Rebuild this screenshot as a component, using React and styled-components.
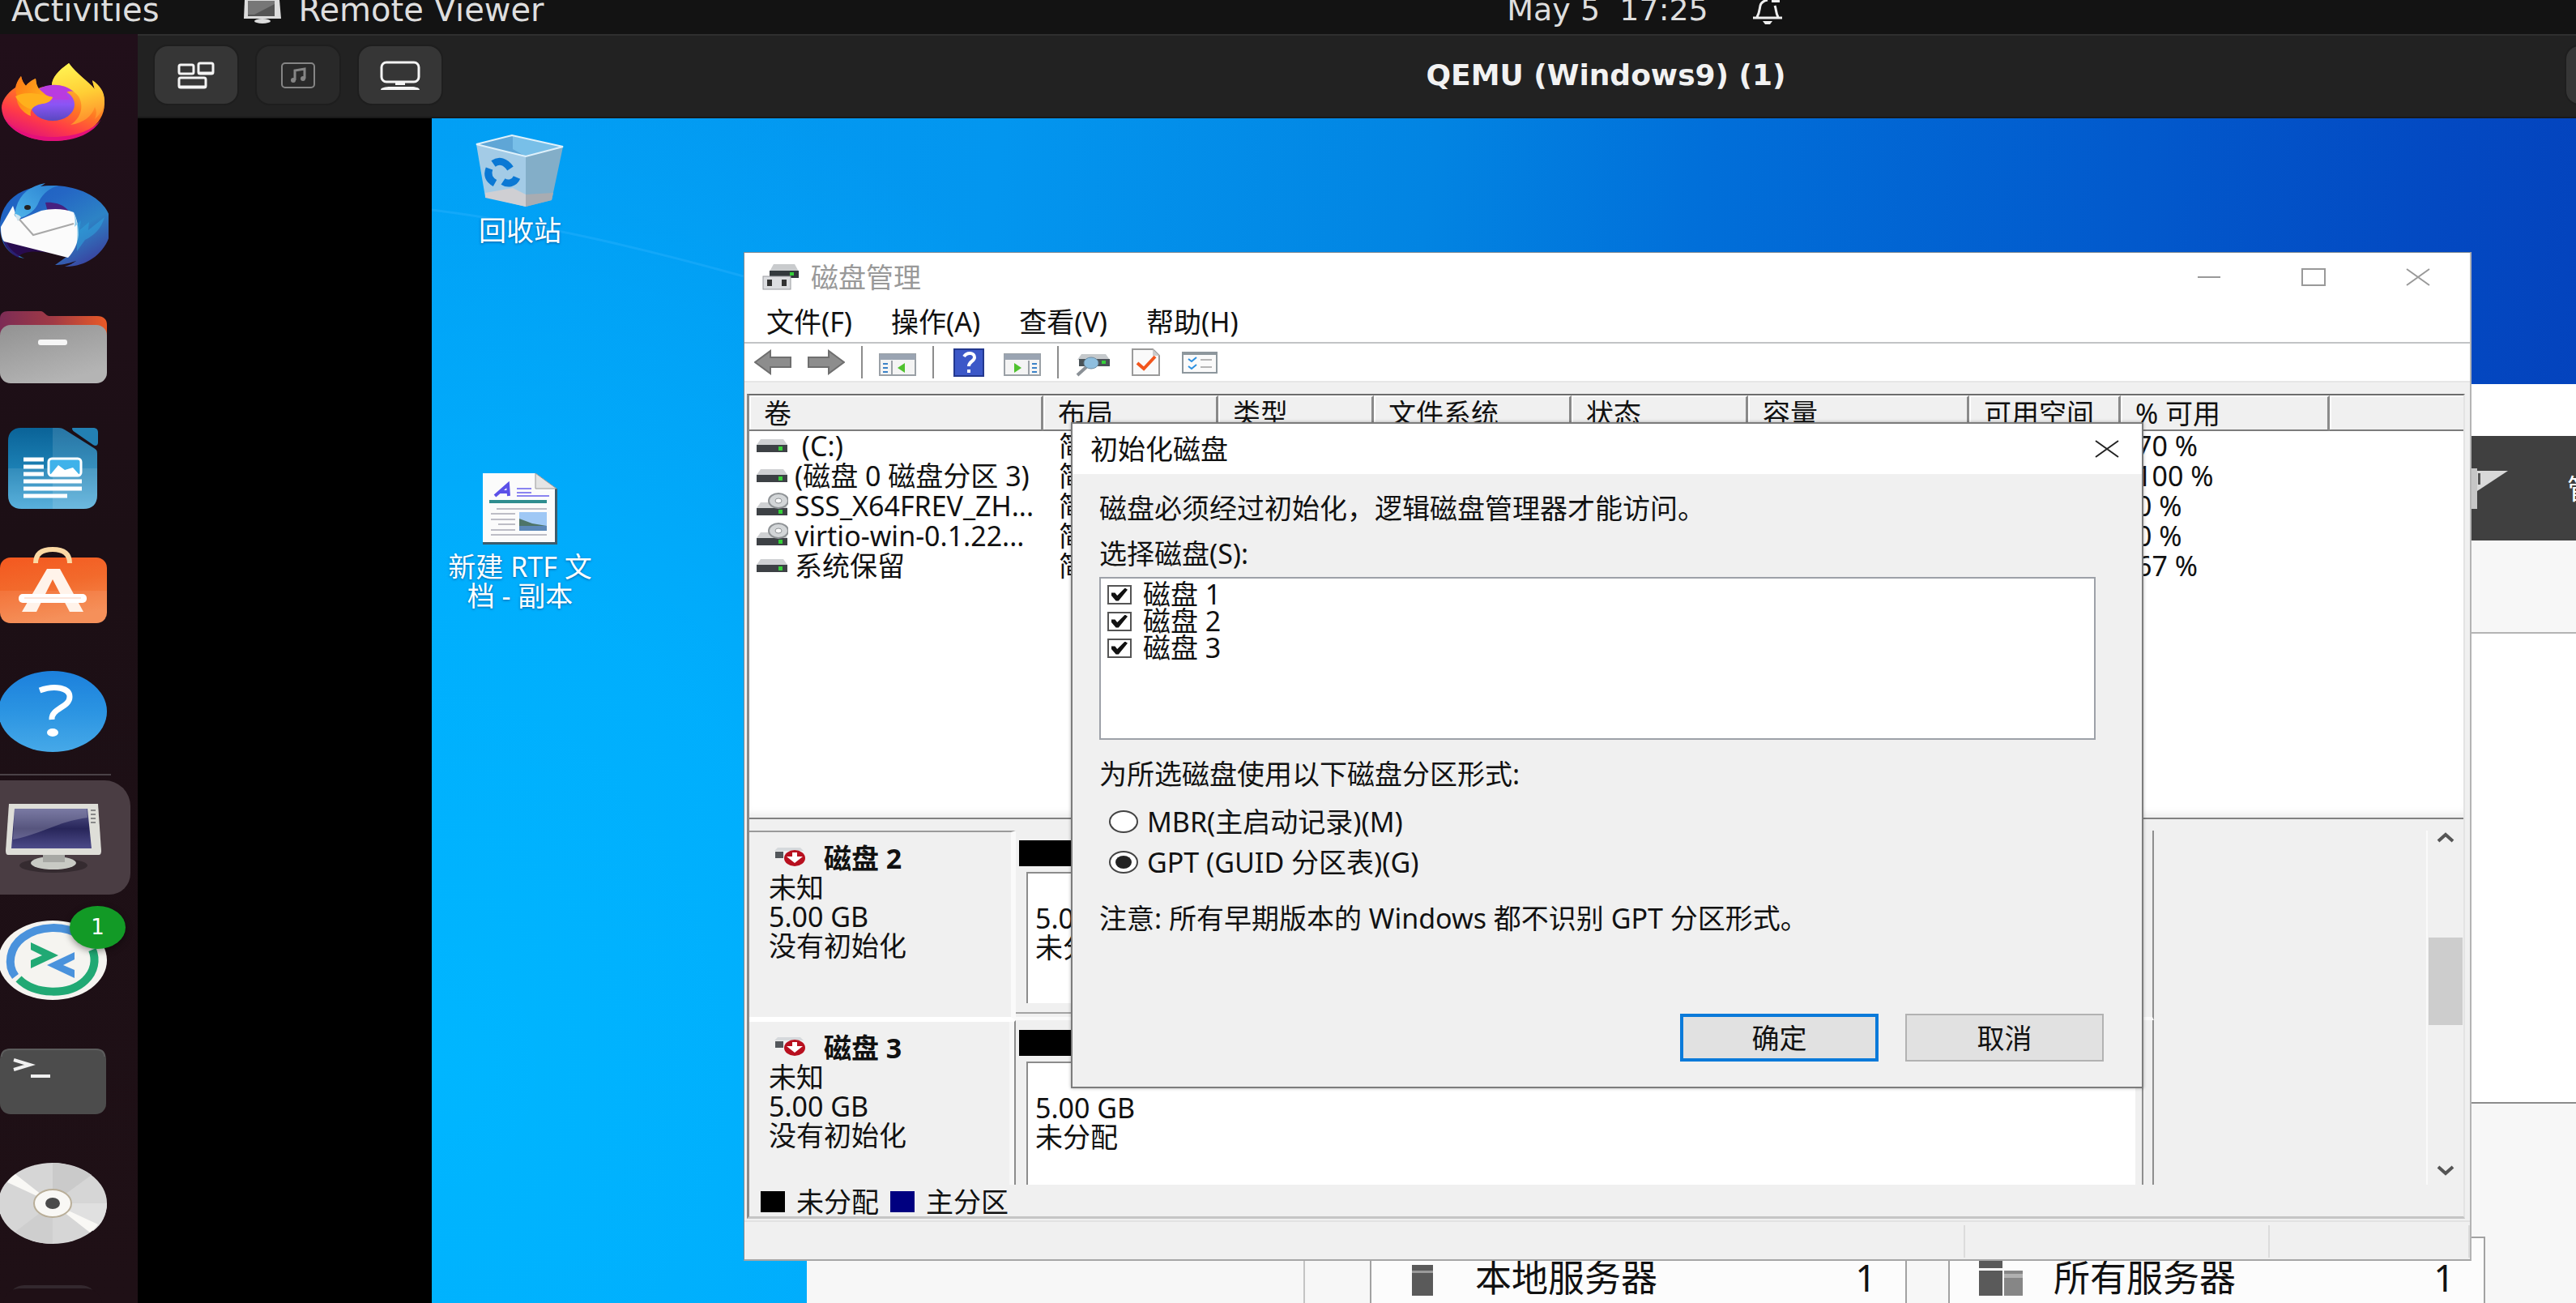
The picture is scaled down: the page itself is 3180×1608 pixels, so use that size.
import React from "react";
import styled, { createGlobalStyle, css } from "styled-components";

const shellFont = `"DejaVu Sans", "Noto Sans", sans-serif`;
const winFont = `"Noto Sans", "Noto Sans CJK SC", sans-serif`;

const Global = createGlobalStyle`
  * { box-sizing: border-box; }
  html, body { margin: 0; height: 100%; overflow: hidden; background: #131313; }
  #root { height: 100%; }
  button { font: inherit; color: inherit; border: 0; padding: 0; background: none; }
  svg { display: block; flex: none; }
`;

/* ---------- GNOME shell ---------- */

const Screen = styled.div`
  height: 100vh;
  display: flex;
  flex-direction: column;
  overflow: hidden;
  font-family: ${shellFont};
`;

const TopBar = styled.header`
  flex: none;
  height: 42px;
  display: flex;
  align-items: flex-start;
  background: #131313;
  color: #dedede;
  font-size: 38px;
  line-height: 24px;
  white-space: pre;
`;

const TopLeft = styled.div`
  flex: 0 0 58.5%;
  display: flex;
  padding-left: 14px;
  gap: 104px;
  font-size: 40px;
`;

const TopButton = styled.button`
  display: flex;
  align-items: flex-start;
  gap: 20px;
  line-height: 24px;
`;

const TopCenter = styled.div`
  display: flex;
  gap: 54px;
`;

const Workspace = styled.div`
  flex: 1;
  min-height: 0;
  display: flex;
`;

const Dock = styled.nav`
  flex: none;
  width: 170px;
  padding-top: 7px;
  display: flex;
  flex-direction: column;
  background: linear-gradient(#210f1a, #1c0f15 40%, #1f1016);
  overflow: hidden;
`;

const DockSlot = styled.div`
  position: relative;
  flex: none;
  height: 151px;
  display: flex;
  align-items: center;
`;

const DockButton = styled.button`
  width: 161px;
  height: 141px;
  display: flex;
  align-items: center;
  border-radius: 0 32px 26px 0;
  background: ${(p) => (p.$active ? "#4a3d43" : "transparent")};
`;

const DockRule = styled.hr`
  flex: none;
  width: 137px;
  height: 2px;
  margin: 0 0 1px;
  border: 0;
  background: #4a4247;
`;

const Badge = styled.span`
  position: absolute;
  left: 86px;
  top: 9px;
  width: 69px;
  height: 53px;
  border-radius: 50%;
  background: #129a26;
  color: #fff;
  font-size: 26px;
  line-height: 53px;
  text-align: center;
  box-shadow: 0 3px 8px rgba(0, 0, 0, 0.4);
`;

const Viewer = styled.main`
  flex: 1;
  min-width: 0;
  display: flex;
  flex-direction: column;
`;

const ViewerHeader = styled.div`
  flex: none;
  height: 104px;
  display: flex;
  align-items: center;
  padding: 0 0 3px 21px;
  background: #222;
  border-top: 2px solid #2f2f2f;
  border-bottom: 2px solid #191919;
  overflow: hidden;
`;

const ViewerTools = styled.div`
  display: flex;
  gap: 24px;
`;

const ViewerButton = styled.button`
  flex: none;
  width: 102px;
  height: 71px;
  display: flex;
  align-items: center;
  justify-content: center;
  border-radius: 16px;
  background: ${(p) => (p.$dim ? "#292929" : "#363636")};
  box-shadow: 0 0 0 2px #1e1e1e;
`;

const ViewerTitle = styled.h1`
  flex: 1;
  margin: 0 0 0 252px;
  text-align: center;
  color: #f2f2f2;
  font-size: 36px;
  line-height: 48px;
`;

const ViewerEnd = styled.div`
  flex: none;
  width: 12px;
`;

const GuestScreen = styled.div`
  flex: 1;
  min-height: 0;
  padding-left: 363px;
  background: #000;
`;

/* ---------- Windows guest ---------- */

const Desktop = styled.div`
  position: relative;
  height: 100%;
  overflow: hidden;
  font-family: ${winFont};
  font-size: 34px;
  line-height: 36px;
  color: #111;
  background:
    radial-gradient(ellipse 1100px 1300px at 0 80%, #00b6ff 0%, rgba(0, 178, 255, 0.85) 45%, rgba(0, 168, 252, 0) 100%),
    linear-gradient(97deg, #029cf3 0%, #0396ef 25%, #0284e2 44%, #016fd9 56%, #0259cc 75%, #0349c2 88%, #043fba 100%);
`;

const Wallpaper = styled.svg`
  position: absolute;
  left: 0;
  top: 0;
`;

const Shortcuts = styled.div`
  position: relative;
  width: 218px;
  padding-top: 20px;
  display: flex;
  flex-direction: column;
  gap: 281px;
`;

const Shortcut = styled.button`
  display: flex;
  flex-direction: column;
  align-items: center;
  gap: 8px;
  padding: 0 8px;
  color: #fff;
  line-height: 36px;
  text-shadow: 0 1px 3px rgba(0, 50, 110, 0.6);
`;

const ServerWindow = styled.section`
  position: absolute;
  left: 463px;
  right: 0;
  top: 328px;
  bottom: 0;
  display: flex;
  flex-direction: column;
  background: #f7f7f7;
`;

const ServerCaption = styled.div`
  flex: none;
  height: 64px;
  background: #fff;
`;

const ServerNav = styled.div`
  flex: none;
  height: 129px;
  display: flex;
  align-items: center;
  justify-content: flex-end;
  gap: 72px;
  background: #404040;
  color: #fff;
`;

const ServerMenu = styled.button`
  width: 11px;
  overflow: hidden;
  white-space: nowrap;
  text-align: left;
`;

const ServerStrip = styled.div`
  flex: none;
  height: 115px;
  border-bottom: 2px solid #b4b4b4;
`;

const ServerBody = styled.div`
  flex: none;
  height: 580px;
  background: #fff;
  border-bottom: 2px solid #8c8c8c;
`;

const ServerTiles = styled.div`
  flex: 1;
  display: flex;
  padding: 164px 112px 0 0;
  gap: 51px;
`;

const TileBlank = styled.div`
  flex: 0 0 615px;
  margin-right: 29px;
  border-right: 2px solid #c4c4c4;
`;

const Tile = styled.div`
  flex: 1;
  display: flex;
  align-items: flex-start;
  padding: 27px 36px 0 36px;
  gap: 36px;
  background: #fcfcfc;
  border: 2px solid #a2a2a2;
  border-bottom: 0;
  font-size: 45px;
  line-height: 44px;
`;

const TileName = styled.span`
  flex: 1;
`;

const DiskWindow = styled.section`
  position: absolute;
  left: 385px;
  right: 129px;
  top: 165px;
  background: #f0f0f0;
  border: 1px solid #7e8a94;
  border-right: 2px solid #b4b4b4;
  border-bottom: 2px solid #a6a6a6;
`;

const TitleBar = styled.div`
  height: ${(p) => p.$h}px;
  display: flex;
  align-items: center;
  gap: 14px;
  padding-left: 22px;
  background: #fff;
  color: ${(p) => p.$ink};
`;

const TitleText = styled.h2`
  flex: 1;
  margin: 0;
  font-size: 34px;
  font-weight: 400;
  line-height: 36px;
`;

const CaptionButtons = styled.div`
  display: flex;
`;

const CaptionButton = styled.button`
  width: ${(p) => p.$w || 129}px;
  height: 44px;
  display: flex;
  align-items: center;
  justify-content: center;
`;

const MenuBar = styled.div`
  height: 52px;
  display: flex;
  align-items: center;
  gap: 48px;
  padding-left: 27px;
  background: #fff;
  border-bottom: 2px solid #c2c4c6;
`;

const MenuButton = styled.button`
  line-height: 36px;
`;

const ToolBar = styled.div`
  height: 48px;
  display: flex;
  align-items: flex-end;
  gap: 20px;
  padding: 0 0 3px 12px;
  background: #fff;
  border-bottom: 2px solid #e6e6e6;
`;

const ToolSep = styled.span`
  width: 2px;
  height: 40px;
  background: #8c8c8c;
`;

const Frame = styled.div`
  margin: 14px 6px 0 3px;
  border-left: 3px solid #8a8a8a;
  border-top: 2px solid #6c6c6c;
  border-right: 2px solid #e3e3e3;
  border-bottom: 3px solid #c5c5c5;
`;

const VolumePane = styled.div`
  height: 523px;
  background: #fff;
  border-bottom: 2px solid #808080;
  box-shadow: inset 0 -10px 8px -4px #efefef;
`;

const VolumeTable = styled.table`
  width: 100%;
  table-layout: fixed;
  border-collapse: separate;
  border-spacing: 0;
  white-space: nowrap;
`;

const HeadCell = styled.th`
  height: 44px;
  padding: 0 0 0 18px;
  text-align: left;
  font-weight: 400;
  line-height: 36px;
  background: #f0f0f0;
  border-top: 2px solid #fff;
  border-bottom: 2px solid #7c7c7c;
  border-right: ${(p) => (p.$last ? 0 : 3)}px solid #8a8a8a;
  box-shadow: inset 2px 0 0 #fff;
`;

const Cell = styled.td`
  height: 37px;
  padding: 0 0 0 ${(p) => (p.$lead ? 8 : 19)}px;
  line-height: 37px;
  overflow: hidden;
`;

const VolumeName = styled.div`
  display: flex;
  align-items: center;
  gap: 8px;
  white-space: pre;
`;

const DiskPane = styled.div`
  height: 451px;
  padding-top: 14px;
  display: flex;
  overflow: hidden;
`;

const DiskRows = styled.div`
  flex: 1;
  min-width: 0;
`;

const DiskRow = styled.div`
  display: flex;
  height: 234px;
`;

const DiskLabel = styled.div`
  flex: 0 0 329px;
  padding: 14px 0 0 24px;
  line-height: 36px;
  ${(p) =>
    p.$selected
      ? css`
          border-top: 2px solid #9a9a9a;
          border-right: 6px solid #fafafa;
          border-bottom: 4px solid #fff;
        `
      : css`
          border-top: 2px solid #fff;
          border-right: 2px solid #8c8c8c;
          box-shadow: inset -6px 0 0 #f8f8f8;
        `}
`;

const DiskTitle = styled.div`
  display: flex;
  align-items: center;
  gap: 23px;
  padding-left: 7px;
  font-weight: 700;
`;

const DiskMap = styled.div`
  flex: 1;
  padding-right: 11px;
  border-right: 2px solid #8e8e8e;
  border-bottom: 4px solid #fafafa;
`;

const DiskInner = styled.div`
  height: 226px;
  padding: 12px 8px 0 4px;
  border-right: 2px solid #8e8e8e;
  border-bottom: 2px solid #a4a4a4;
`;

const DiskBar = styled.div`
  height: 32px;
  background: #000;
`;

const Partition = styled.div`
  height: 162px;
  margin: 7px 0 0 9px;
  padding: 37px 0 0 9px;
  background: #fff;
  border-left: 2px solid #8c8c8c;
  border-top: 2px solid #8c8c8c;
  line-height: 36px;
`;

const DiskRest = styled.div`
  flex: 0 0 336px;
`;

const ScrollBar = styled.div`
  flex: none;
  width: 46px;
  display: flex;
  flex-direction: column;
  align-items: center;
  padding: 0 0 6px;
  border-left: 2px solid #fafafa;
`;

const ScrollThumb = styled.div`
  width: 42px;
  height: 108px;
  margin: 112px 0 auto;
  background: #cdcdcd;
`;

const Legend = styled.div`
  height: 39px;
  display: flex;
  align-items: center;
  gap: 14px;
  padding: 3px 0 0 14px;
`;

const Swatch = styled.span`
  width: 30px;
  height: 26px;
  background: ${(p) => p.$fill};
`;

const StatusBar = styled.div`
  height: 48px;
  margin-top: 2px;
  padding: 4px 0 2px;
  display: flex;
  border-top: 2px solid #e2e2e2;
`;

const StatusCell = styled.div`
  flex: ${(p) => p.$flex};
  border-right: 2px solid #dcdcdc;
`;

const Dialog = styled.section`
  position: absolute;
  left: 403px;
  right: 403px;
  top: 209px;
  background: #f0f0f0;
  border: 2px solid #7c7c7c;
  box-shadow: 0 0 4px rgba(0, 0, 0, 0.3);
`;

const DialogBody = styled.div`
  padding: 24px 57px 0 33px;
`;

const Para = styled.p`
  margin: ${(p) => p.$top || 0}px 0 0;
  line-height: 36px;
`;

const CheckList = styled.div`
  height: 201px;
  margin-top: 11px;
  padding: 3px 8px;
  background: #fff;
  border: 2px solid #9da1a8;
`;

const Choice = styled.label`
  display: flex;
  align-items: center;
  gap: ${(p) => p.$gap}px;
  line-height: ${(p) => p.$line}px;
  width: max-content;
`;

const Check = styled.input`
  appearance: none;
  position: relative;
  width: 30px;
  height: 24px;
  margin: 0;
  background: #fff;
  border: 2px solid #555;
  &:checked::before {
    content: "";
    position: absolute;
    inset: 2px 3px;
    background: #111;
    clip-path: polygon(0 38%, 22% 38%, 36% 60%, 84% 0, 100% 14%, 44% 100%, 28% 100%, 0 60%);
  }
`;

const RadioGroup = styled.fieldset`
  margin: 23px 0 0;
  padding: 0 0 0 12px;
  border: 0;
  display: flex;
  flex-direction: column;
  gap: 14px;
`;

const Radio = styled.input`
  appearance: none;
  position: relative;
  width: 36px;
  height: 28px;
  margin: 0;
  background: #fff;
  border: 2px solid #444;
  border-radius: 50%;
  &:checked::before {
    content: "";
    position: absolute;
    inset: 4px 6px;
    border-radius: 50%;
    background: #222;
  }
`;

const DialogFoot = styled.div`
  display: flex;
  justify-content: flex-end;
  gap: 33px;
  padding: 100px 47px 31px 0;
`;

const PushButton = styled.button`
  width: 245px;
  height: 59px;
  background: #e1e1e1;
  border: ${(p) => (p.$primary ? "4px solid #0a7ad9" : "2px solid #b2b2b2")};
  line-height: 36px;
`;

/* ---------- drawings ---------- */

const DockSvg = ({ children }) => (
  <svg width="134" height="112" viewBox="0 0 134 112" aria-hidden="true">
    {children}
  </svg>
);

const Grad = ({ id, stops, v = "0 0 0 1" }) => {
  const [x1, y1, x2, y2] = v.split(" ");
  return (
    <linearGradient id={id} x1={x1} y1={y1} x2={x2} y2={y2}>
      {stops.map((c, i) => (
        <stop key={i} offset={i / (stops.length - 1)} stopColor={c} />
      ))}
    </linearGradient>
  );
};

const Firefox = () => (
  <DockSvg>
    <defs>
      <Grad id="ff1" v="0.8 0 0.3 1" stops={["#fff04a", "#ffbd2e", "#ff7a22", "#ff3b47", "#e0107c"]} />
      <Grad id="ff2" stops={["#c23be0", "#8a55f5", "#5a48c0"]} />
      <Grad id="ff3" v="0 0 1 0.4" stops={["#ff7a16", "#ffb41c"]} />
      <Grad id="ff4" v="0.4 0 0.6 1" stops={["#fff352", "#ffce35", "#ff8a2c"]} />
    </defs>
    <path fill="url(#ff1)" d="M26 25C22 30 20 34 19 39 8 46 2 56 2 64c1 24 29 41 63 41s64-19 64-46c0-13-5-22-15-28l3 11C108 30 96 24 85 9 72 18 64 27 64 37c-7 0-13 1-18 4l-2-13c-6 3-9 5-12 9-3-3-5-7-6-12z" />
    <path fill="#e3107a" d="M4 74c8 19 32 31 61 31s51-10 60-27c-9 13-31 22-60 22-30 0-52-10-61-26z" />
    <path fill="url(#ff4)" d="M85 9C72 18 64 27 64 36c15-1 26 5 33 14 7 12 3 27-10 35 16-2 27-11 30-22 3 5 2 10 0 15 8-7 12-15 12-23 0-11-6-19-15-25l3 11C108 30 96 24 85 9z" />
    <ellipse cx="65" cy="60" rx="27" ry="20" fill="url(#ff2)" />
    <path fill="#b93be0" d="M47 41c14-8 32-7 44 3-6-1-8 0-10 2l6 8H52z" />
    <path fill="url(#ff3)" d="M26 25c-6 8-8 18-5 25-2 8 6 20 17 24-2-8 4-14 14-15 8-1 11-4 13-8-6-1-9-3-12-6-3-3-8-5-9-17-6 3-9 5-12 9-3-3-5-7-6-12z" />
    <path fill="#ffb01c" d="M19 50c10-6 24-5 46 1-2 4-5 7-13 8-6 1-10 3-13 7-7-2-15-7-20-16z" />
  </DockSvg>
);

const Thunderbird = () => (
  <DockSvg>
    <defs>
      <Grad id="tb1" v="0 0 0.8 1" stops={["#1a5fc0", "#2466c4", "#2d83c5", "#3a3f9e"]} />
      <Grad id="tb2" v="1 0 0 1" stops={["#2a7fd0", "#4db4ea"]} />
    </defs>
    <path fill="url(#tb1)" d="M50 10c44-6 87 16 87 48 0 28-26 52-57 51 6-2 10-4 14-7-11 4-19 5-26 5l14-10L8 66C4 80 14 92 30 99 8 95 0 78 0 58 0 36 16 14 50 10z" />
    <path fill="#2b0a5c" d="M4 76l72 20 10 3C60 90 30 86 22 98 12 92 5 84 4 76z" opacity=".8" />
    <path fill="#47217f" d="M56 30c14-1 26 4 31 14l-28-2z" />
    <path fill="#fbfbfb" d="M16 34L1 60c0 8 1 14 4 18l79 20c7-7 12-18 13-28 0-10-2-20-6-28-12-5-28-5-40-2L22 52z" />
    <path fill="none" stroke="#a8a8a8" strokeWidth="2" d="M18 44l23 26 50-14" />
    <path fill="url(#tb2)" d="M56 6C34 10 21 22 18 46c2 3 4 3 6 3 12-3 20-10 24-20 5-11 14-17 24-20-6 0-12 0-22 1 3-2 5-3 6-4z" />
    <ellipse cx="34" cy="36" rx="4" ry="3" fill="#222" />
    <path fill="#cfe4ee" d="M18 44c3 0 6 2 8 4l-4 5z" />
    <path fill="#2fa3dc" d="M90 40c3 8 3 14 2 20l8-8-2 12 12-10-1 10 20-16c-4 14-12 22-24 28l-10 14c0-20 3-34-5-50z" opacity=".55" />
  </DockSvg>
);

const Files = () => (
  <DockSvg>
    <defs>
      <Grad id="fi1" v="0 0 1 0" stops={["#7c2c55", "#a13a45", "#ea5a26"]} />
      <Grad id="fi2" v="0 0 0.5 1" stops={["#929292", "#b4b4b4"]} />
    </defs>
    <path fill="url(#fi1)" d="M0 22c0-6 4-9 10-9h40c5 0 6 6 11 6h59c8 0 12 4 12 11v40H0z" />
    <rect x="0" y="30" width="132" height="72" rx="13" fill="url(#fi2)" />
    <rect x="47" y="48" width="36" height="7" rx="3" fill="#f6f6f6" />
  </DockSvg>
);

const Writer = () => (
  <DockSvg>
    <defs>
      <Grad id="wr" stops={["#0a6398", "#1c80b4", "#47a8d8"]} />
    </defs>
    <path fill="url(#wr)" d="M26 6h46c4 0 6 1 9 3l35 22c3 2 4 3 4 7v51c0 11-6 17-17 17H27c-11 0-17-6-17-17V22C10 12 16 6 26 6z" />
    <path fill="#fff" opacity=".12" d="M65 6h7c4 0 6 1 9 3l35 22c3 2 4 3 4 7v51c0 11-6 17-17 17H65z" />
    <path fill="#fff" opacity=".1" d="M10 56h110v33c0 11-6 17-17 17H27c-11 0-17-6-17-17z" />
    <path fill="#2380b3" d="M90 6h25c4 0 6 2 6 6v12c0 4-3 5-6 3L92 11c-3-2-4-5-2-5z" />
    <path stroke="#fff" strokeWidth="5" d="M29 45h25M29 54h25M29 63h25M29 72h72M29 81h72M29 90h54" />
    <rect x="60" y="44" width="40" height="21" rx="4" fill="#3fb2ea" stroke="#fff" strokeWidth="3" />
    <path fill="#fff" d="M62 64l10-12 8 6 10-3 8 9z" />
  </DockSvg>
);

const Software = () => (
  <DockSvg>
    <defs>
      <Grad id="so" v="0 0 0.3 1" stops={["#f4581f", "#f26a2c", "#f5874c"]} />
    </defs>
    <rect x="0" y="15" width="132" height="81" rx="13" fill="url(#so)" />
    <path fill="#fff" opacity=".08" d="M0 56h132v27c0 8-5 13-13 13H13C5 96 0 91 0 83z" />
    <path fill="none" stroke="#fbd9a4" strokeWidth="6" d="M44 22C44 9 53 5 65 5s21 4 21 17" />
    <path fill="#fff3ea" d="M27 82L58 29h16l29 53H86L65 42 45 82z" />
    <rect x="23" y="60" width="84" height="11" rx="5" fill="#fff" />
    <path stroke="#f8cdb8" strokeWidth="1" d="M30 65h70" />
  </DockSvg>
);

const Help = () => (
  <DockSvg>
    <defs>
      <Grad id="he" stops={["#1c80dc", "#2b94e2", "#46a9e8"]} />
    </defs>
    <ellipse cx="65" cy="54" rx="67" ry="50" fill="url(#he)" />
    <path fill="none" stroke="#fff" strokeWidth="7" d="M49 28c19-7 37-3 37 8 0 13-23 14-22 28" />
    <ellipse cx="65" cy="80" rx="7" ry="5" fill="#fff" />
  </DockSvg>
);

const Monitor = () => (
  <DockSvg>
    <defs>
      <Grad id="mo" stops={["#55558a", "#28265a", "#4c4a88"]} />
    </defs>
    <ellipse cx="66" cy="90" rx="42" ry="9" fill="#352b30" />
    <path fill="#deded8" d="M11 14h110l4 58c0 3-1 5-3 5H10c-2 0-3-2-3-5z" />
    <path fill="url(#mo)" d="M18 20h90l5 49H14z" />
    <path fill="#fff" opacity=".22" d="M18 20h89l1 11C70 36 50 52 16 58z" />
    <path stroke="#888" strokeWidth="2" d="M112 22h6M112 27h6M112 32h6M112 37h6" />
    <path fill="#a7a8a4" d="M53 77h27v8H53z" />
    <ellipse cx="66" cy="87" rx="28" ry="8" fill="#c8cac4" />
    <path fill="#a7a8a4" d="M53 78h27v8H53z" />
  </DockSvg>
);

const Remmina = () => (
  <DockSvg>
    <ellipse cx="65" cy="56" rx="67" ry="49" fill="#f5f4f0" />
    <path fill="none" stroke="#4a92dc" strokeWidth="10" d="M19 76C8 62 12 40 28 28c20-15 52-16 72-2" />
    <path fill="none" stroke="#21a974" strokeWidth="10" d="M23 79c20 20 62 21 82 2 12-11 14-26 9-38" />
    <path fill="#21a974" d="M38 34l34 16-34 16V56l14-6-14-7z" />
    <path fill="#4a92dc" d="M92 46L58 62l34 16V68l-14-6 14-7z" />
  </DockSvg>
);

const Terminal = () => (
  <DockSvg>
    <rect x="0" y="14" width="131" height="81" rx="13" fill="#4c4c4c" />
    <path fill="none" stroke="#5c5c5c" strokeWidth="2" d="M2 24c0-6 4-9 11-9h105c7 0 11 3 11 9" />
    <path fill="none" stroke="#f0f0f0" strokeWidth="4" d="M17 28l20 6-20 6M38 48h24" />
  </DockSvg>
);

const Disc = () => (
  <DockSvg>
    <ellipse cx="65" cy="54" rx="67" ry="50" fill="#d6d6d6" />
    <path fill="#cacaca" d="M65 54V4c18 0 36 7 48 15z" />
    <path fill="#e0e0e0" d="M65 54l67 0c0 14-6 26-17 34z" />
    <path fill="#cecece" d="M65 54v50c-18 0-35-6-46-15z" />
    <path fill="#f9f8f5" d="M65 54L9 28c2-4 6-7 10-10zM65 54l56 26c-3 4-6 7-10 10z" />
    <ellipse cx="65" cy="54" rx="23" ry="17" fill="#f9f8f5" stroke="#b9ae98" strokeWidth="2" />
    <ellipse cx="65" cy="54" rx="9" ry="7" fill="#4a4a4a" />
  </DockSvg>
);

const Hidden = () => (
  <DockSvg>
    <rect x="10" y="4" width="110" height="90" rx="20" fill="#33282e" />
    <rect x="4" y="8" width="122" height="90" rx="20" fill="#1f1016" />
  </DockSvg>
);

const DOCK_TOP = [
  ["Firefox", Firefox],
  ["Thunderbird", Thunderbird],
  ["Files", Files],
  ["Writer", Writer],
  ["Software", Software],
  ["Help", Help],
];
const DOCK_RUNNING = [
  ["Remote Viewer", Monitor, { active: true }],
  ["Remmina", Remmina, { badge: 1 }],
  ["Terminal", Terminal],
  ["Disc", Disc],
  ["More", Hidden],
];

const DockEntry = ({ name, Icon, active, badge }) => (
  <DockSlot>
    <DockButton $active={active} aria-label={name}>
      <Icon />
    </DockButton>
    {badge && <Badge>{badge}</Badge>}
  </DockSlot>
);

const DriveIcon = ({ cd }) => (
  <svg width="40" height="34" viewBox="0 0 40 34" aria-hidden="true">
    <g transform={cd ? undefined : "translate(0 -4)"}>
      <path fill="#cfd1d3" d="M6 12h28l5 7H1z" />
      <rect x="1" y="19" width="38" height="9" fill="#3d4145" />
      <rect x="28" y="21" width="5" height="5" fill="#35d13a" />
    </g>
    {cd && (
      <>
        <ellipse cx="28" cy="10" rx="12" ry="9" fill="#d3d6d8" stroke="#8f9396" strokeWidth="2" />
        <ellipse cx="28" cy="10" rx="4" ry="3" fill="#fff" stroke="#8f9396" strokeWidth="1" />
      </>
    )}
  </svg>
);

const DiskBadIcon = () => (
  <svg width="38" height="28" viewBox="0 0 38 28" aria-hidden="true">
    <path fill="#d6d9dc" d="M4 1h28l4 4H0z" />
    <rect x="1" y="6" width="10" height="8" fill="#53575b" />
    <ellipse cx="25" cy="14" rx="13" ry="10" fill="#b8101f" />
    <path fill="#fff" d="M22 7h6v5h7l-10 8-10-8h7z" />
  </svg>
);

const Cross = ({ color }) => (
  <svg width="30" height="22" viewBox="0 0 30 22" aria-hidden="true">
    <path fill="none" stroke={color} strokeWidth="2" d="M1 1l28 20M29 1L1 21" />
  </svg>
);

const TOOLS = [
  ["后退", <path fill="#8d8d8d" stroke="#6f6f6f" strokeWidth="2" d="M1 20L20 6v8h25v12H20v8z" />],
  ["前进", <path fill="#8d8d8d" stroke="#6f6f6f" strokeWidth="2" d="M45 20L26 6v8H1v12h25v8z" />],
  null,
  [
    "控制台树",
    <>
      <rect x="1" y="10" width="44" height="26" fill="#f4f4f4" stroke="#9aa0a6" strokeWidth="2" />
      <path fill="#9aa4b2" d="M1 10h44v7H1z" />
      <path stroke="#3b82c8" strokeWidth="2" d="M5 22h6M5 27h6M5 32h6" />
      <path stroke="#9aa0a6" strokeWidth="2" d="M16 18v18" />
      <path fill="#4fc22e" d="M32 21v12l-9-6z" />
    </>,
  ],
  null,
  [
    "帮助",
    <>
      <rect x="5" y="4" width="36" height="33" fill="#3c58c8" stroke="#23388f" strokeWidth="2" />
      <path fill="none" stroke="#fff" strokeWidth="4" d="M17 13c4-6 13-5 13 1 0 5-7 5-7 11M23 29v4" />
    </>,
  ],
  [
    "操作窗格",
    <>
      <rect x="1" y="10" width="44" height="26" fill="#f4f4f4" stroke="#9aa0a6" strokeWidth="2" />
      <path fill="#9aa4b2" d="M1 10h44v7H1z" />
      <path stroke="#3b82c8" strokeWidth="2" d="M35 22h6M35 27h6M35 32h6" />
      <path stroke="#9aa0a6" strokeWidth="2" d="M31 18v18" />
      <path fill="#4fc22e" d="M13 21v12l9-6z" />
    </>,
  ],
  null,
  [
    "刷新",
    <>
      <path fill="#c5c9cc" d="M8 10h30l5 7H3z" />
      <rect x="5" y="16" width="38" height="9" fill="#4a5358" />
      <rect x="33" y="18" width="5" height="4" fill="#35d13a" />
      <path stroke="#8a9096" strokeWidth="4" d="M14 26L3 36" />
      <ellipse cx="20" cy="21" rx="9" ry="7" fill="#8ebede" stroke="#6c8ca2" strokeWidth="1" />
    </>,
  ],
  [
    "属性",
    <>
      <path fill="#fafafa" stroke="#9a9a9a" strokeWidth="2" d="M5 4h25l8 8v24H5z" />
      <path fill="#ccc" d="M30 4v8h8z" />
      <path fill="none" stroke="#f2551c" strokeWidth="4" d="M11 21l8 7 14-15" />
    </>,
  ],
  [
    "列表",
    <>
      <rect x="1" y="8" width="42" height="25" fill="#fafafa" stroke="#8d979d" strokeWidth="2" />
      <path fill="#8d979d" d="M1 8h42v3H1z" />
      <path fill="none" stroke="#2a8fe0" strokeWidth="2" d="M8 16l4 3 6-5M8 25l4 3 6-5" />
      <path stroke="#b5b5b5" strokeWidth="2" d="M23 17h14M23 26h14" />
    </>,
  ],
];

/* ---------- data ---------- */

const COLUMNS = [
  ["卷", 363],
  ["布局", 216],
  ["类型", 192],
  ["文件系统", 244],
  ["状态", 218],
  ["容量", 273],
  ["可用空间", 187],
  ["% 可用", 258],
  ["", null],
];

const VOLUMES = [
  { name: " (C:)", free: "70 %" },
  { name: "(磁盘 0 磁盘分区 3)", free: "100 %" },
  { name: "SSS_X64FREV_ZH...", free: "0 %", cd: true },
  { name: "virtio-win-0.1.22...", free: "0 %", cd: true },
  { name: "系统保留", free: "67 %" },
];

const DISKS = [
  { name: "磁盘 2", selected: true },
  { name: "磁盘 3" },
];

const InitDialog = () => (
  <Dialog role="dialog" aria-labelledby="init-title">
    <TitleBar $h={62} $ink="#111">
      <TitleText id="init-title">初始化磁盘</TitleText>
      <CaptionButton $w={86} aria-label="关闭">
        <Cross color="#222" />
      </CaptionButton>
    </TitleBar>
    <DialogBody>
      <Para>磁盘必须经过初始化，逻辑磁盘管理器才能访问。</Para>
      <Para $top={20} id="pick">选择磁盘(S):</Para>
      <CheckList role="group" aria-labelledby="pick">
        {["磁盘 1", "磁盘 2", "磁盘 3"].map((d) => (
          <Choice key={d} $gap={14} $line={33}>
            <Check type="checkbox" defaultChecked />
            {d}
          </Choice>
        ))}
      </CheckList>
      <Para $top={24} id="style">为所选磁盘使用以下磁盘分区形式:</Para>
      <RadioGroup aria-labelledby="style">
        <Choice $gap={11} $line={36}>
          <Radio type="radio" name="style" />
          MBR(主启动记录)(M)
        </Choice>
        <Choice $gap={11} $line={36}>
          <Radio type="radio" name="style" defaultChecked />
          GPT (GUID 分区表)(G)
        </Choice>
      </RadioGroup>
      <Para $top={33}>注意: 所有早期版本的 Windows 都不识别 GPT 分区形式。</Para>
    </DialogBody>
    <DialogFoot>
      <PushButton $primary>确定</PushButton>
      <PushButton>取消</PushButton>
    </DialogFoot>
  </Dialog>
);

const DiskManagement = () => (
  <DiskWindow>
    <TitleBar $h={60} $ink="#999">
      <svg width="46" height="34" viewBox="0 0 46 34" aria-hidden="true">
        <path fill="#c9cbcd" d="M14 1h26l5 9H9z" />
        <rect x="9" y="9" width="36" height="9" fill="#33383c" />
        <rect x="34" y="11" width="5" height="4" fill="#35d13a" />
        <rect x="1" y="16" width="34" height="16" fill="#dcdde0" stroke="#9a9ca0" strokeWidth="1" />
        <path fill="#333" d="M6 20h6v8H6zM24 20h6v8h-6z" />
      </svg>
      <TitleText>磁盘管理</TitleText>
      <CaptionButtons>
        <CaptionButton aria-label="最小化">
          <svg width="30" height="22" viewBox="0 0 30 22" aria-hidden="true">
            <path stroke="#999" strokeWidth="2" d="M1 11h28" />
          </svg>
        </CaptionButton>
        <CaptionButton aria-label="最大化">
          <svg width="30" height="22" viewBox="0 0 30 22" aria-hidden="true">
            <rect x="1" y="1" width="28" height="20" fill="none" stroke="#999" strokeWidth="2" />
          </svg>
        </CaptionButton>
        <CaptionButton aria-label="关闭">
          <Cross color="#999" />
        </CaptionButton>
      </CaptionButtons>
    </TitleBar>
    <MenuBar>
      {["文件(F)", "操作(A)", "查看(V)", "帮助(H)"].map((m) => (
        <MenuButton key={m}>{m}</MenuButton>
      ))}
    </MenuBar>
    <ToolBar>
      {TOOLS.map((t, i) =>
        t ? (
          <button key={i} aria-label={t[0]}>
            <svg width="46" height="40" viewBox="0 0 46 40" aria-hidden="true">
              {t[1]}
            </svg>
          </button>
        ) : (
          <ToolSep key={i} />
        )
      )}
    </ToolBar>
    <Frame>
      <VolumePane>
        <VolumeTable>
          <colgroup>
            {COLUMNS.map(([name, width]) => (
              <col key={name} width={width || undefined} />
            ))}
          </colgroup>
          <thead>
            <tr>
              {COLUMNS.map(([name], i) => (
                <HeadCell key={name} $last={i === COLUMNS.length - 1}>
                  {name}
                </HeadCell>
              ))}
            </tr>
          </thead>
          <tbody>
            {VOLUMES.map((v) => (
              <tr key={v.name}>
                <Cell $lead>
                  <VolumeName>
                    <DriveIcon cd={v.cd} />
                    {v.name}
                  </VolumeName>
                </Cell>
                <Cell>简单</Cell>
                <Cell colSpan={5} />
                <Cell>{v.free}</Cell>
                <Cell />
              </tr>
            ))}
          </tbody>
        </VolumeTable>
      </VolumePane>
      <DiskPane>
        <DiskRows>
          {DISKS.map((d) => (
            <DiskRow key={d.name}>
              <DiskLabel $selected={d.selected}>
                <DiskTitle>
                  <DiskBadIcon />
                  {d.name}
                </DiskTitle>
                <div>未知</div>
                <div>5.00 GB</div>
                <div>没有初始化</div>
              </DiskLabel>
              <DiskMap>
                <DiskInner>
                  <DiskBar />
                  <Partition>
                    <div>5.00 GB</div>
                    <div>未分配</div>
                  </Partition>
                </DiskInner>
              </DiskMap>
              <DiskRest />
            </DiskRow>
          ))}
        </DiskRows>
        <ScrollBar>
          <svg width="24" height="20" viewBox="0 0 24 20" aria-hidden="true">
            <path fill="none" stroke="#555" strokeWidth="4" d="M3 13l9-8 9 8" />
          </svg>
          <ScrollThumb />
          <svg width="24" height="20" viewBox="0 0 24 20" aria-hidden="true">
            <path fill="none" stroke="#555" strokeWidth="4" d="M3 4l9 8 9-8" />
          </svg>
        </ScrollBar>
      </DiskPane>
      <Legend>
        <Swatch $fill="#000" />
        未分配
        <Swatch $fill="#000080" />
        主分区
      </Legend>
    </Frame>
    <StatusBar>
      <StatusCell $flex="1" />
      <StatusCell $flex="0 0 376px" />
      <StatusCell $flex="0 0 247px" />
    </StatusBar>
    <InitDialog />
  </DiskWindow>
);

const ServerManager = () => (
  <ServerWindow>
    <ServerCaption />
    <ServerNav>
      <svg width="48" height="52" viewBox="0 0 48 52" aria-hidden="true">
        <path fill="#c6c6c6" d="M1 1h8v50H1z" />
        <path fill="#d9d9d9" d="M9 4h38L9 29z" />
        <path fill="#555" d="M10 7h3v14h-3z" />
      </svg>
      <ServerMenu>管理</ServerMenu>
    </ServerNav>
    <ServerStrip />
    <ServerBody />
    <ServerTiles>
      <TileBlank />
      <Tile>
        <svg width="56" height="44" viewBox="0 0 56 44" aria-hidden="true">
          <path fill="#5a5a5a" d="M14 6h26v7H14zM14 16h26v28H14z" />
          <path fill="#9a9a9a" d="M14 13h26v3H14z" />
        </svg>
        <TileName>本地服务器</TileName>
        <span>1</span>
      </Tile>
      <Tile>
        <svg width="56" height="44" viewBox="0 0 56 44" aria-hidden="true">
          <path fill="#5a5a5a" d="M0 0h29v10H0zM0 13h29v31H0z" />
          <path fill="#868686" d="M31 13h23v4H31zM31 22h23v22H31z" />
          <path fill="#b0b0b0" d="M31 17h23v5H31z" />
        </svg>
        <TileName>所有服务器</TileName>
        <span>1</span>
      </Tile>
    </ServerTiles>
  </ServerWindow>
);

export default function App() {
  return (
    <Screen>
      <Global />
      <TopBar>
        <TopLeft>
          <TopButton>Activities</TopButton>
          <TopButton>
            <svg width="48" height="30" viewBox="0 0 48 30" aria-hidden="true">
              <path fill="#dcdcdc" d="M2 0h43l2 23H1z" />
              <path fill="#555" d="M6 1h33v19H6z" />
              <path fill="#777" d="M6 1h33v4L14 18H6z" />
              <ellipse cx="24" cy="26" rx="10" ry="3" fill="#dcdcdc" />
            </svg>
            Remote Viewer
          </TopButton>
        </TopLeft>
        <TopCenter>
          <span>{"May 5  17:25"}</span>
          <svg width="38" height="30" viewBox="0 0 38 30" aria-hidden="true">
            <path fill="none" stroke="#eee" strokeWidth="3" d="M1 22h36M6 21c3-5 3-9 4-14 1-4 4-6 9-7M32 21c-3-5-2-9-4-14" />
            <path fill="#eee" d="M24 0h10v3H24zM13 26h12l-3 4h-6z" />
          </svg>
        </TopCenter>
      </TopBar>
      <Workspace>
        <Dock>
          {DOCK_TOP.map(([name, Icon]) => (
            <DockEntry key={name} name={name} Icon={Icon} />
          ))}
          <DockRule />
          {DOCK_RUNNING.map(([name, Icon, extra]) => (
            <DockEntry key={name} name={name} Icon={Icon} {...extra} />
          ))}
        </Dock>
        <Viewer>
          <ViewerHeader>
            <ViewerTools>
              <ViewerButton aria-label="Displays">
                <svg width="46" height="34" viewBox="0 0 46 34" aria-hidden="true">
                  <g fill="none" stroke="#f4f4f4" strokeWidth="3">
                    <rect x="2" y="4" width="18" height="11" rx="2" />
                    <rect x="26" y="2" width="18" height="13" rx="2" />
                    <rect x="2" y="20" width="33" height="12" rx="2" />
                  </g>
                  <path stroke="#f4f4f4" strokeWidth="3" d="M26 14h18M3 31h31" />
                </svg>
              </ViewerButton>
              <ViewerButton $dim aria-label="Send key">
                <svg width="42" height="32" viewBox="0 0 42 32" aria-hidden="true">
                  <rect x="1" y="1" width="40" height="30" rx="4" fill="none" stroke="#858585" strokeWidth="2" />
                  <path fill="none" stroke="#858585" strokeWidth="3" d="M17 22V10l12-2v12" />
                  <ellipse cx="15" cy="22" rx="3" ry="3" fill="#858585" />
                  <ellipse cx="27" cy="20" rx="3" ry="3" fill="#858585" />
                </svg>
              </ViewerButton>
              <ViewerButton aria-label="Fullscreen">
                <svg width="50" height="36" viewBox="0 0 50 36" aria-hidden="true">
                  <rect x="2" y="2" width="46" height="24" rx="6" fill="none" stroke="#f4f4f4" strokeWidth="3" />
                  <path fill="#f4f4f4" d="M19 27h12v3H19zM1 36c0-3 6-4 12-4h24c6 0 12 1 12 4z" />
                </svg>
              </ViewerButton>
            </ViewerTools>
            <ViewerTitle>QEMU (Windows9) (1)</ViewerTitle>
            <ViewerEnd>
              <ViewerButton aria-label="Menu" />
            </ViewerEnd>
          </ViewerHeader>
          <GuestScreen>
            <Desktop>
              <Wallpaper width="800" height="400" viewBox="0 0 800 400" aria-hidden="true">
                <path fill="none" stroke="#35b4ff" strokeOpacity=".35" strokeWidth="3" d="M0 113C120 128 260 160 385 195" />
              </Wallpaper>
              <Shortcuts>
                <Shortcut>
                  <svg width="110" height="92" viewBox="0 0 110 92" aria-hidden="true">
                    <path fill="#5fa6d6" d="M1 12L45 1l63 14-46 12z" />
                    <path fill="#78bfe8" d="M46 2l62 13-46 12-16-9z" />
                    <path fill="#a3cbe6" d="M1 12l61 15v62l-50-12z" />
                    <path fill="#83aec8" d="M62 27l46-12-14 66-32 8z" />
                    <path fill="#cfcfd3" d="M12 72l34-6 16 8v15l-50-11z" />
                    <path fill="#a8acb2" d="M62 74l34-2-2 9-32 8z" />
                    <path fill="none" stroke="#dff1fb" strokeWidth="2" d="M1 12L45 1l63 14-46 12z" />
                    <g fill="none" stroke="#0a78d4" strokeWidth="9">
                      <path d="M22 36c7-5 15-3 21 6" />
                      <path d="M17 42c-3 8 0 14 7 18" />
                      <path d="M34 58c6 4 14 2 17-5" />
                    </g>
                  </svg>
                  回收站
                </Shortcut>
                <Shortcut>
                  <svg width="94" height="90" viewBox="0 0 94 90" aria-hidden="true">
                    <path fill="#fbfbfb" d="M1 1h65l26 19v68H1z" />
                    <path fill="#3d5c6c" d="M1 86h92v3H1zM90 20h3v68h-3z" />
                    <path fill="#e4e4e4" stroke="#999" strokeWidth="1" d="M66 1v19h26z" />
                    <path fill="none" stroke="#5b50e8" strokeWidth="4" d="M16 29l16-14 1 14M22 24h10" />
                    <path stroke="#8a84f0" strokeWidth="2" d="M43 20h18M43 25h18M43 29h40" />
                    <path stroke="#2f8d8f" strokeWidth="4" d="M9 36h71" />
                    <path stroke="#bdbdc6" strokeWidth="2" d="M18 45h62M11 51h30M11 58h30M20 64h21M11 71h30M11 77h69" />
                    <rect x="46" y="49" width="34" height="23" fill="#9fc8f5" />
                    <path fill="#4e7468" d="M46 57l16 6 18 3v2H46z" />
                    <path fill="#5d88b8" d="M46 66h34v6H46z" />
                  </svg>
                  新建 RTF 文
                  <br />档 - 副本
                </Shortcut>
              </Shortcuts>
              <ServerManager />
              <DiskManagement />
            </Desktop>
          </GuestScreen>
        </Viewer>
      </Workspace>
    </Screen>
  );
}
